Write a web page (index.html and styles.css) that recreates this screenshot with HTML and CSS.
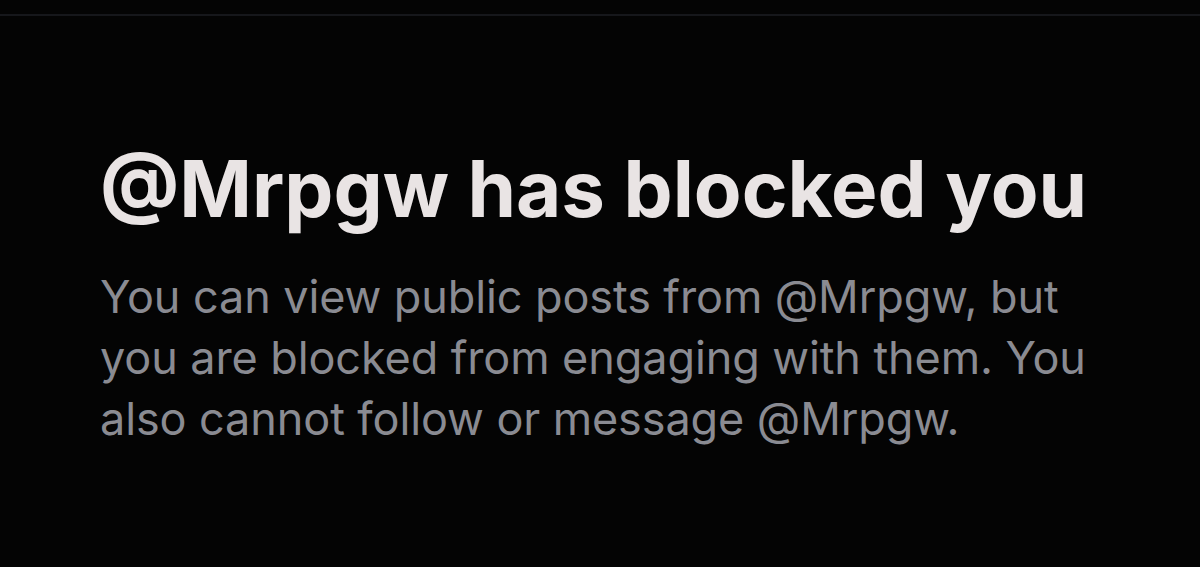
FILE: index.html
```html
<!DOCTYPE html>
<html>
<head>
<meta charset="utf-8">
<link rel="stylesheet" href="styles.css">
</head>
<body>
<div class="topline"></div>
<main class="block">
  <h1 class="title">@Mrpgw has blocked you</h1>
  <p class="desc">You can view public posts from @Mrpgw, but you are blocked from engaging with them. You also cannot follow or message @Mrpgw.</p>
</main>
</body>
</html>
```
FILE: styles.css
```css
html, body {
  margin: 0;
  padding: 0;
  background: #040404;
  height: 100%;
  overflow: hidden;
}
.topline {
  margin-top: 14px;
  height: 2px;
  background: #16171b;
}
.block {
  padding: 126px 100px 0 100px;
  font-family: Inter, "Liberation Sans", sans-serif;
}
.title {
  margin: 0;
  font-size: 78px;
  font-weight: 700;
  line-height: 94px;
  color: #e9e4e4;
  letter-spacing: 0;
}
.desc {
  margin: 30px 0 0 0;
  width: 1010px;
  font-size: 45px;
  font-weight: 400;
  line-height: 61px;
  letter-spacing: -0.1px;
  color: #8a8b92;
}
```
